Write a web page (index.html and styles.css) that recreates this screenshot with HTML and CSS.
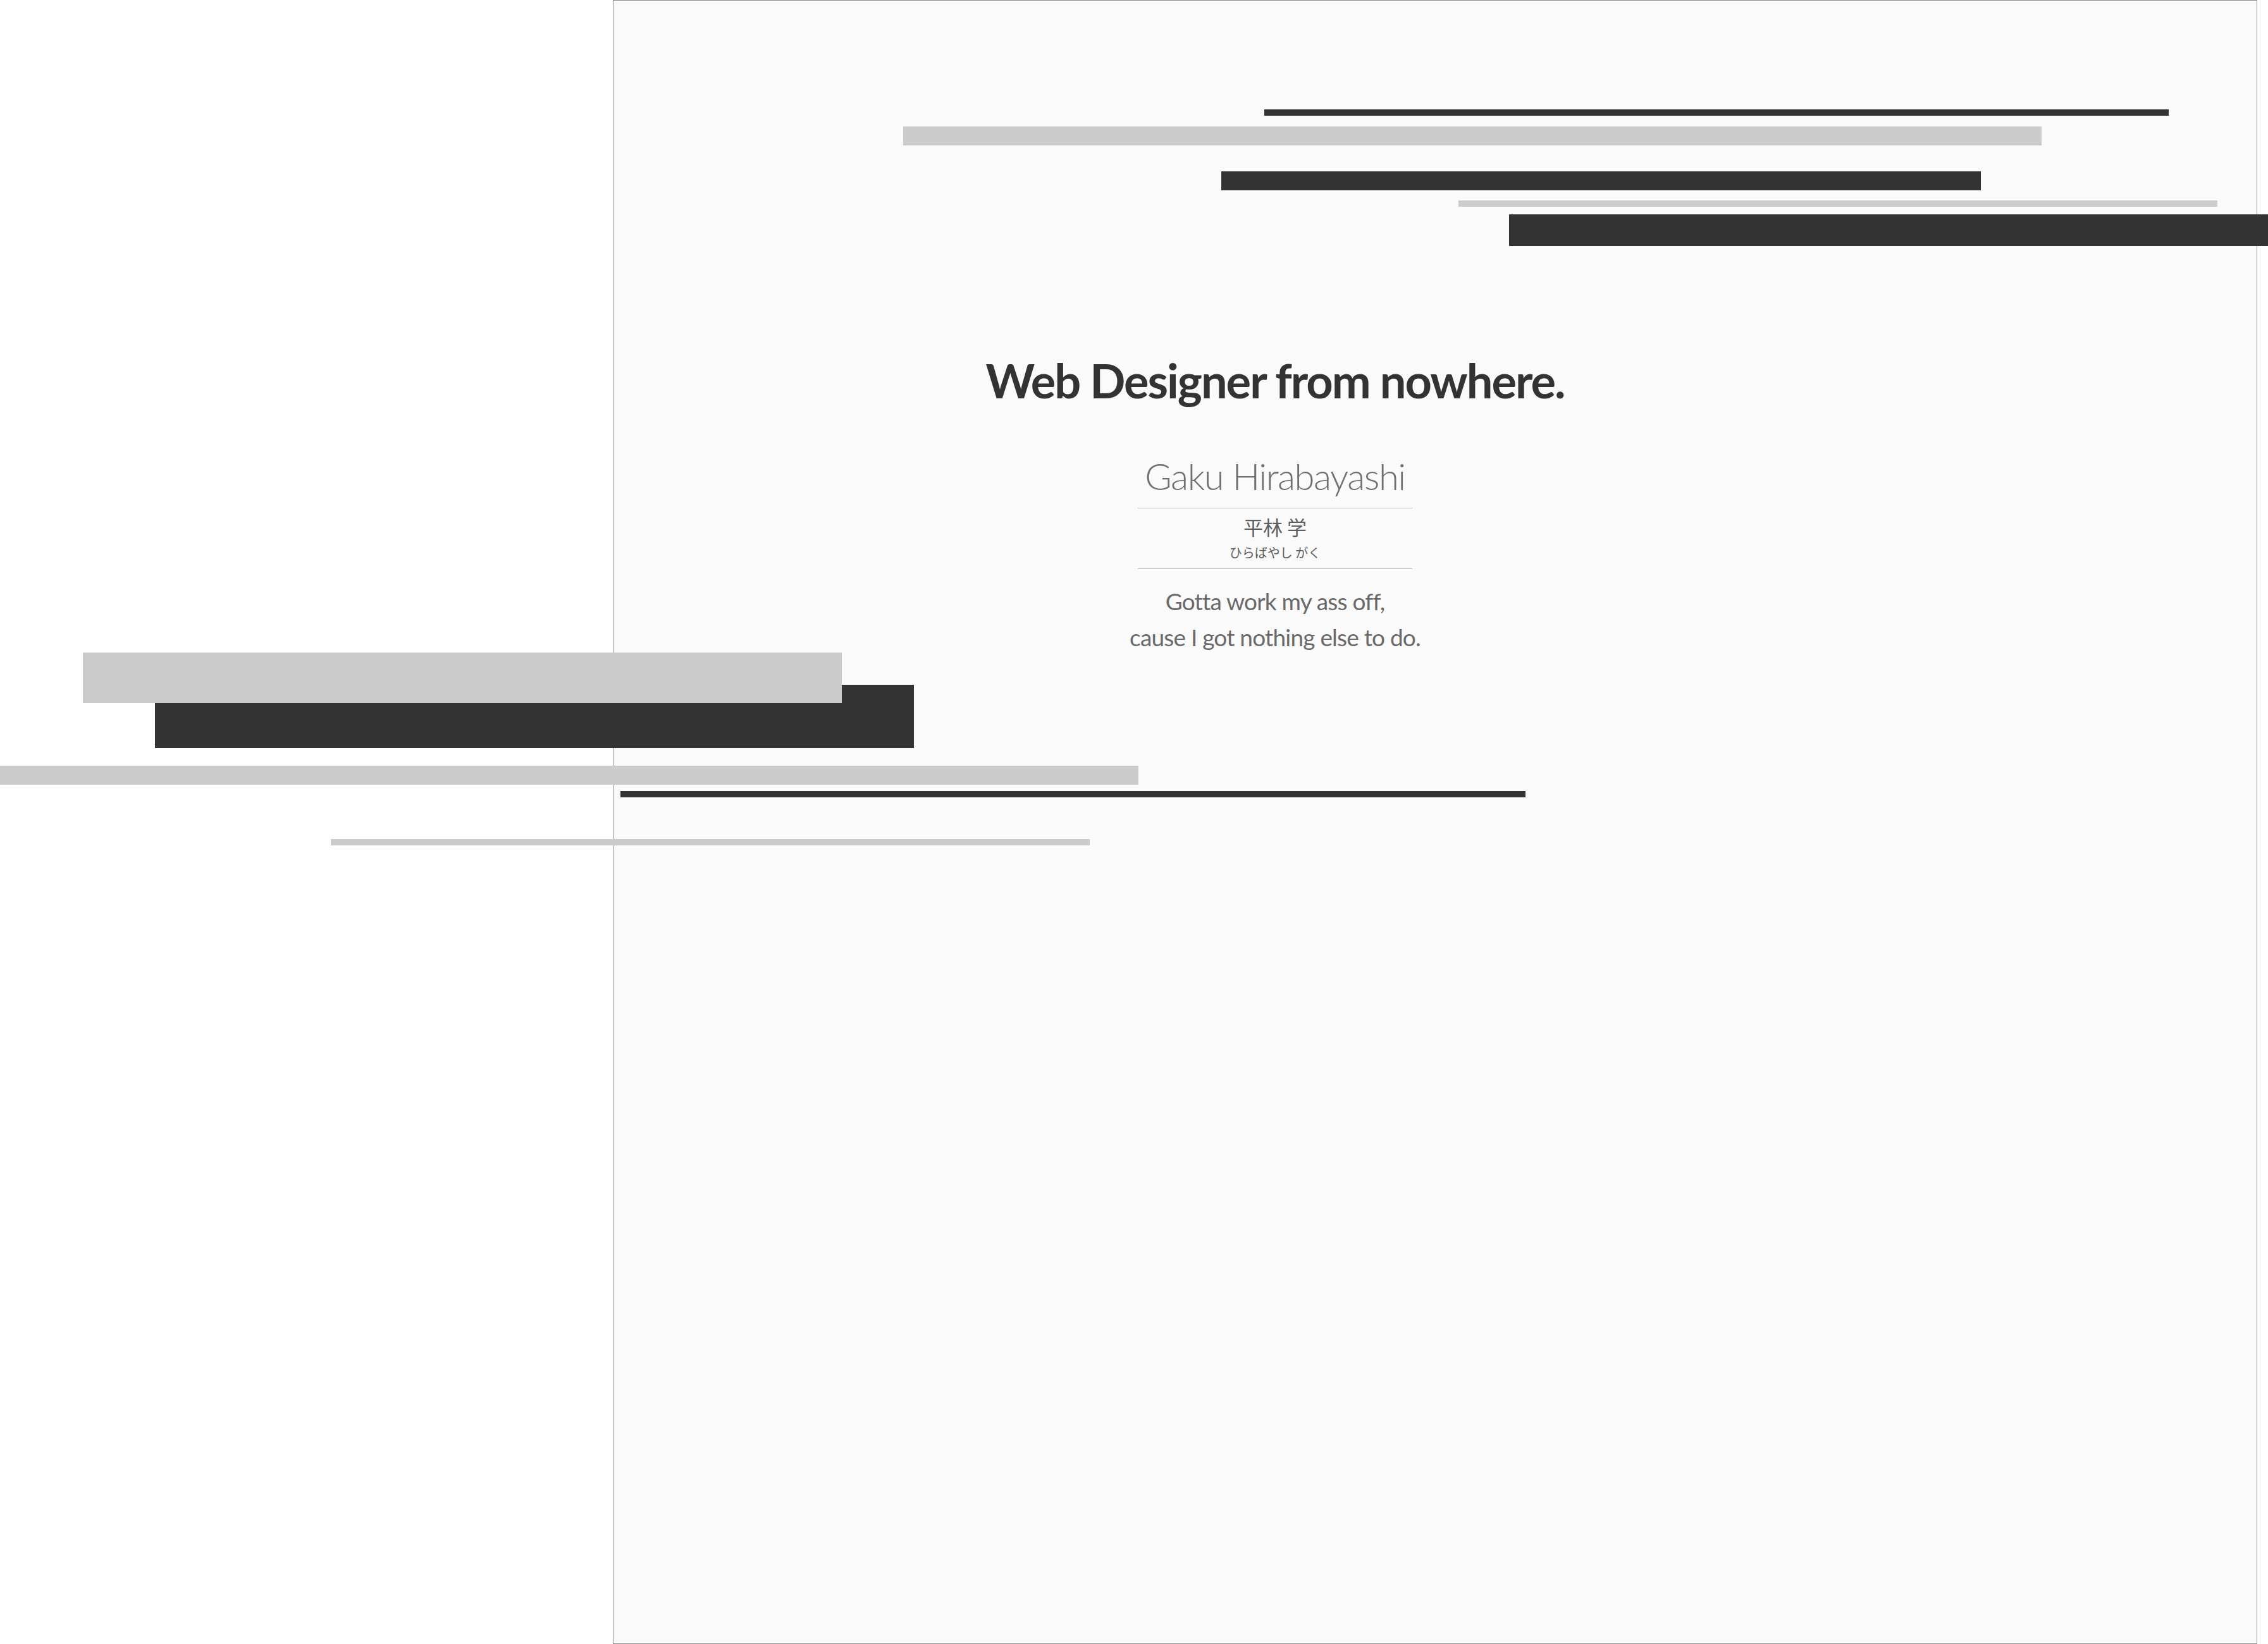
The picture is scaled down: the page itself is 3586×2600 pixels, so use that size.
FILE: index.html
```html
<!DOCTYPE html>
<html lang="en">
<head>
    <meta charset="UTF-8">
    <meta name="viewport" content="width=device-width, initial-scale=1.0">
    <title>Gaku Hirabayashi - Web Designer from nowhere.</title>
    <link rel="stylesheet" href="styles.css">
</head>
<body>
    <div class="stage">
        <div class="panel">
            <div class="intro">
                <h1>Web Designer from nowhere.</h1>
                <div class="name-block">
                    <p class="name">Gaku Hirabayashi</p>
                    <div class="name-jp">
                        <p class="kanji">平林 学</p>
                        <p class="kana">ひらばやし がく</p>
                    </div>
                </div>
                <p class="tagline">Gotta work my ass off,<br>cause I got nothing else to do.</p>
            </div>
        </div>
    </div>

    <!-- decorative strokes -->
    <div class="bar dark b1"></div>
    <div class="bar light b2"></div>
    <div class="bar dark b3"></div>
    <div class="bar light b4"></div>
    <div class="bar dark b5"></div>
    <div class="bar dark b7"></div>
    <div class="bar light b6"></div>
    <div class="bar light b8"></div>
    <div class="bar dark b9"></div>
    <div class="bar light b10"></div>
</body>
</html>
```

FILE: styles.css
```css
html, body {
    margin: 0;
    padding: 0;
}
body {
    position: relative;
    width: 3586px;
    height: 2600px;
    overflow: hidden;
    background-color: #ffffff;
    font-family: Lato, "Noto Sans", sans-serif;
}
.stage {
    display: flex;
    justify-content: flex-end;
    padding-right: 17px;
}
.panel {
    width: 2598px;
    height: 2598px;
    border: 1px solid #8c8c8c;
    background-color: #fafafa;
}
.intro {
    width: 1000px;
    margin-left: 546px;
    text-align: center;
    white-space: nowrap;
}
h1 {
    margin: 564px 0 0;
    font-size: 74px;
    line-height: 74px;
    font-weight: 700;
    letter-spacing: -2px;
    color: #333333;
}
.name-block {
    width: 434px;
    margin: 85px auto 0;
}
.name {
    margin: 0;
    padding-bottom: 21px;
    font-size: 58px;
    line-height: 58px;
    font-weight: 300;
    letter-spacing: -1.5px;
    color: #707070;
    border-bottom: 1px solid #b0b0b0;
}
.name-jp {
    padding: 11px 0 13px;
    border-bottom: 1px solid #b0b0b0;
    font-family: "Noto Sans CJK JP", sans-serif;
    color: #5e5e5e;
}
.kanji {
    margin: 0;
    font-size: 31px;
    line-height: 36px;
}
.kana {
    margin: 11px 0 0;
    font-size: 20px;
    line-height: 24px;
}
.tagline {
    margin: 22px 0 0;
    font-size: 37px;
    line-height: 57px;
    letter-spacing: -0.8px;
    color: #6a6a6a;
}
.bar {
    position: absolute;
}
.bar.dark {
    background-color: #333333;
}
.bar.light {
    background-color: #cccccc;
}
.b1 { left: 1999px; top: 173px; width: 1430px; height: 10px; }
.b2 { left: 1428px; top: 200px; width: 1800px; height: 30px; }
.b3 { left: 1931px; top: 271px; width: 1201px; height: 30px; }
.b4 { left: 2306px; top: 317px; width: 1200px; height: 10px; }
.b5 { left: 2386px; top: 339px; width: 1200px; height: 50px; }
.b6 { left: 131px; top: 1032px; width: 1200px; height: 80px; }
.b7 { left: 245px; top: 1083px; width: 1200px; height: 100px; }
.b8 { left: 0; top: 1211px; width: 1800px; height: 30px; }
.b9 { left: 981px; top: 1251px; width: 1431px; height: 10px; }
.b10 { left: 523px; top: 1327px; width: 1200px; height: 10px; }
```
